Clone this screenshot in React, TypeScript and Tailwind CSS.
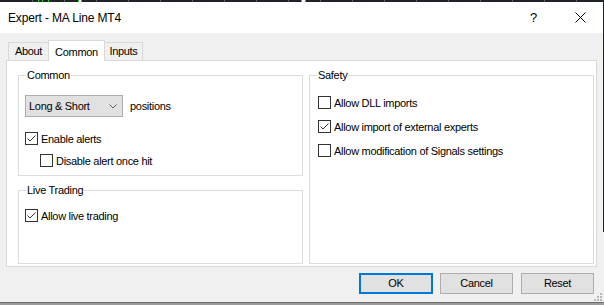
import * as React from "react"

function CheckBox({ checked, label }: { checked?: boolean; label: string }) {
  return (
    <div className="flex items-center h-[13px]">
      <div className="w-[13px] h-[13px] border border-[#333333] bg-white shrink-0">
        {checked && (
          <svg width="11" height="11" viewBox="0 0 11 11" className="block">
            <polyline points="1.5,5.5 4,8 9.5,2.5" fill="none" stroke="#333333" strokeWidth="1" />
          </svg>
        )}
      </div>
      <span className="ml-[3px] leading-[14px] whitespace-nowrap">{label}</span>
    </div>
  )
}

function GroupBox({ title, className, children }: { title: string; className: string; children?: React.ReactNode }) {
  return (
    <div className={`relative border border-[#dcdcdc] ${className}`}>
      <span className="absolute left-[7px] -top-[8px] bg-white px-[1px] leading-[14px] whitespace-nowrap">{title}</span>
      {children}
    </div>
  )
}

function Button({ label, focused }: { label: string; focused?: boolean }) {
  return (
    <div
      className={`h-[21px] flex items-center justify-center bg-[#e1e1e1] ${
        focused ? "w-[74px] border-2 border-[#0078d7]" : "w-[73px] border border-[#adadad]"
      }`}
    >
      {label}
    </div>
  )
}

export default function App() {
  const ticks = [32, 64, 96, 128, 160, 192, 224, 256, 288, 320, 352, 384, 416, 448, 480, 512, 544, 576]

  return (
    <div className="relative w-[604px] h-[305px] overflow-hidden bg-[#f0f0f0] flex flex-col text-black text-[11px] tracking-[-0.3px] font-['Liberation_Sans',Arial,sans-serif]">
      {/* chart behind the dialog */}
      <svg width="604" height="2" className="block shrink-0 bg-[#1f2329]">
        {ticks.map((x) => (
          <rect key={x} x={x} y="0" width="1" height="2" fill="#5a6068" />
        ))}
        <rect x="38" y="0" width="1" height="2" fill="#1fd11f" />
        <rect x="42" y="0" width="1" height="2" fill="#1fd11f" />
        <rect x="48" y="0" width="1" height="2" fill="#1fd11f" />
        <rect x="78" y="0" width="4" height="2" fill="#1fd11f" />
        <rect x="79" y="0" width="2" height="2" fill="#ffffff" />
        <rect x="301" y="0" width="5" height="2" fill="#1fd11f" />
        <rect x="302" y="0" width="3" height="2" fill="#ffffff" />
      </svg>

      {/* title bar */}
      <div className="h-[31px] shrink-0 bg-white flex items-center pl-[8px] tracking-[-0.15px]">
        <span className="text-[12px]">Expert - MA Line MT4</span>
        <span className="ml-auto text-[13px] w-[8px]">?</span>
        <svg width="11" height="11" viewBox="0 0 11 11" className="ml-[37px] mr-[18px]">
          <path d="M0.5 0.5 L10.5 10.5 M10.5 0.5 L0.5 10.5" stroke="#000" strokeWidth="1" />
        </svg>
      </div>

      {/* tabs */}
      <div className="mt-[7px] h-[20px] flex items-end pl-[8px] shrink-0">
        <div className="w-[40px] h-[18px] border-l border-t border-[#d9d9d9] flex items-center justify-center">About</div>
        <div className="relative z-10 w-[57px] h-[21px] -mb-[1px] bg-white border-l border-t border-r border-[#d9d9d9] flex items-start pt-[3px] justify-center">
          Common
        </div>
        <div className="w-[38px] h-[18px] border-t border-r border-[#d9d9d9] flex items-center justify-center">Inputs</div>
      </div>

      {/* tab page */}
      <div className="ml-[6px] w-[591px] h-[207px] shrink-0 bg-white border border-[#d9d9d9] pt-[14px] pl-[11px] pr-[2px] grid grid-cols-2 gap-x-[6px]">
        <div className="flex flex-col">
          <GroupBox title="Common" className="h-[101px] pl-[6px] pt-[19px]">
            <div className="flex items-center">
              <div className="w-[98px] h-[22px] bg-[#e1e1e1] border border-[#adadad] flex items-center pl-[3px] pr-[5px]">
                <span>Long &amp; Short</span>
                <svg width="8" height="5" viewBox="0 0 8 5" className="ml-auto">
                  <polyline points="0.5,0.5 4,4 7.5,0.5" fill="none" stroke="#606060" strokeWidth="1" />
                </svg>
              </div>
              <span className="ml-[7px]">positions</span>
            </div>
            <div className="mt-[15px]">
              <CheckBox checked label="Enable alerts" />
            </div>
            <div className="mt-[9px] ml-[15px]">
              <CheckBox label="Disable alert once hit" />
            </div>
          </GroupBox>
          <GroupBox title="Live Trading" className="mt-[14px] h-[74px] pl-[6px] pt-[18px]">
            <CheckBox checked label="Allow live trading" />
          </GroupBox>
        </div>
        <GroupBox title="Safety" className="h-[189px] pl-[8px] pt-[20px] flex flex-col gap-[11px]">
          <CheckBox label="Allow DLL imports" />
          <CheckBox checked label="Allow import of external experts" />
          <CheckBox label="Allow modification of Signals settings" />
        </GroupBox>
      </div>

      {/* buttons */}
      <div className="mt-[6px] flex justify-end pr-[10px] shrink-0">
        <Button label="OK" focused />
        <div className="ml-[7px]">
          <Button label="Cancel" />
        </div>
        <div className="ml-[8px]">
          <Button label="Reset" />
        </div>
      </div>

      <div className="flex-1" />
      <div className="h-[1px] bg-[#6b6b6b] shrink-0" />
      <div className="h-[2px] bg-[#9c9c9c] shrink-0" />

      {/* size grip */}
      <svg width="8" height="8" viewBox="0 0 8 8" className="absolute left-[594px] top-[293px]">
        <rect x="6" y="0" width="2" height="2" fill="#b8b8b8" />
        <rect x="3" y="3" width="2" height="2" fill="#b8b8b8" />
        <rect x="6" y="3" width="2" height="2" fill="#b8b8b8" />
        <rect x="0" y="6" width="2" height="2" fill="#b8b8b8" />
        <rect x="3" y="6" width="2" height="2" fill="#b8b8b8" />
        <rect x="6" y="6" width="2" height="2" fill="#b8b8b8" />
      </svg>

      {/* chart window edge behind the dialog */}
      <div className="absolute right-0 top-0 w-[1px] h-[232px] bg-[#1f2329]" />
    </div>
  )
}
